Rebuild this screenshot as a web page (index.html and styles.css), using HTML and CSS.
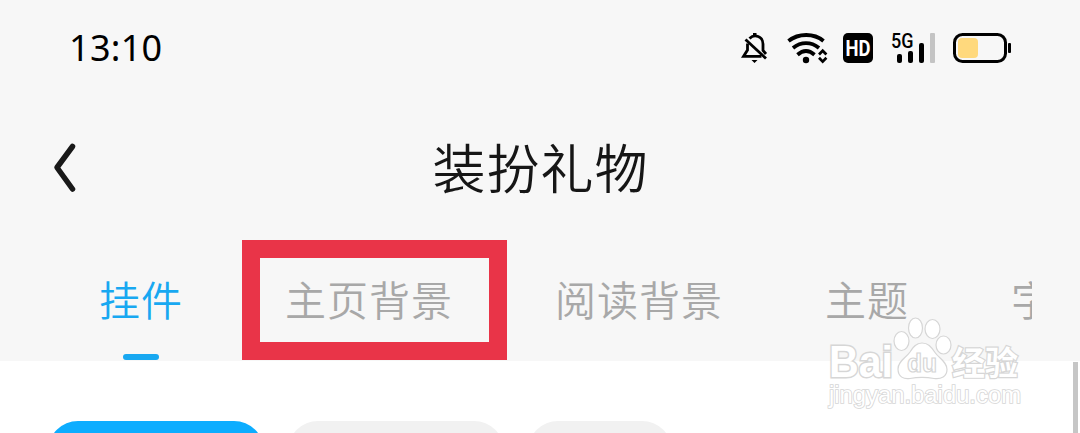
FILE: index.html
```html
<!DOCTYPE html>
<html lang="zh-CN">
<head>
  <meta charset="utf-8">
  <title>装扮礼物</title>
  <link rel="stylesheet" href="styles.css">
</head>
<body>
  <header class="header">
    <div class="status-bar">
      <span class="time">13:10</span>
      <svg class="status-icons" width="274" height="36" viewBox="738 30 274 36">
        <!-- muted bell -->
        <g fill="none" stroke="#000" stroke-width="2.8">
          <path d="M745.500 39.500l20.500 19"/>
          <path d="M747.500 43.500V50l-4 6.400h18M749.500 38.500c5-5 13.500-2 13.500 5.500v6.500l3 3.500"/>
        </g>
        <path d="M753 33h3.500v3.500H753zM751.500 60h6l-3 3z"/>
        <!-- wifi -->
        <g fill="none" stroke="#000" stroke-width="3.800">
          <path d="M788.500 41c10-8 25.500-8 35 0"/>
          <path d="M793 48c8-6.500 18-6.500 26 0"/>
          <path d="M797.500 54.800c5.500-4.800 11.500-4.800 17 0"/>
        </g>
        <circle cx="806" cy="60" r="3.200"/>
        <path d="M819 54.500l3.700-3.800 3.700 3.800M819 57.800l3.700 3.800 3.700-3.800" fill="none" stroke="#000" stroke-width="2.700"/>
        <!-- hd badge -->
        <rect x="843" y="33" width="30" height="30" rx="5"/>
        <text class="hd" x="845.500" y="56" textLength="25" lengthAdjust="spacingAndGlyphs">HD</text>
        <!-- signal -->
        <text class="net" x="891" y="47.500" textLength="22.500" lengthAdjust="spacingAndGlyphs">5G</text>
        <rect x="897" y="54" width="5" height="9" rx="2"/>
        <rect x="908" y="51" width="5" height="12" rx="2"/>
        <rect x="919" y="43" width="5" height="20" rx="2"/>
        <rect x="930" y="33" width="5" height="30" rx="1" fill="#c4c4c4"/>
        <!-- battery -->
        <rect x="954.500" y="34.500" width="51" height="27" rx="8" fill="none" stroke="#000" stroke-width="3"/>
        <rect x="958" y="38" width="20" height="20" rx="4" fill="#ffd97d"/>
        <rect x="1008" y="43" width="3" height="10" rx="1"/>
      </svg>
    </div>

    <div class="title-bar">
      <svg class="back" width="28" height="52" viewBox="0 0 28 52">
        <path d="M20.500 4.500L5 25.500l15.500 21.500" fill="none" stroke="#191919" stroke-width="5.500" stroke-linecap="round" stroke-linejoin="round"/>
      </svg>
      <h1 class="title">装扮礼物</h1>
    </div>

    <nav class="tabs">
      <a class="tab active">挂件</a>
      <a class="tab marked">主页背景</a>
      <a class="tab">阅读背景</a>
      <a class="tab">主题</a>
      <a class="tab">字</a>
    </nav>
  </header>

  <main class="content">
    <div class="chip chip-first"></div>
    <div class="chip chip-second"></div>
    <div class="chip chip-third"></div>
    <div class="scrollbar"></div>
  </main>

  <svg class="watermark" width="210" height="100" viewBox="820 314 210 100">
    <g class="mark">
      <text class="bai" x="829" y="377" textLength="64" lengthAdjust="spacingAndGlyphs">Bai</text>
      <ellipse cx="901.500" cy="341" rx="7.500" ry="9.500"/>
      <ellipse cx="915.500" cy="328" rx="7" ry="10"/>
      <ellipse cx="932.500" cy="329" rx="7.500" ry="9.500"/>
      <ellipse cx="943.500" cy="345" rx="7.500" ry="9"/>
      <path d="M922 343c-6 0-9 4-12 9-4 6-12 9-12 17 0 8 6 10.500 12 9.500 8-1.500 16-1.500 24 0 7 1 13-2 13-9 0-8-8-11-12-17-4-6-7-9.500-13-9.500z"/>
      <text class="du" x="907" y="372" textLength="30" lengthAdjust="spacingAndGlyphs">du</text>
      <text class="jy" x="952" y="375">经验</text>
      <text class="url" x="829" y="403" textLength="192" lengthAdjust="spacingAndGlyphs">jingyan.baidu.com</text>
    </g>
  </svg>
</body>
</html>
```
FILE: styles.css
```css
*,
*::before,
*::after {
  box-sizing: border-box;
}
body {
  margin: 0;
  height: 433px;
  overflow: hidden;
  background: #fff;
  font-family: "Noto Sans CJK SC", sans-serif;
}
.header {
  height: 361px;
  background: #f7f7f7;
}
.status-bar {
  display: flex;
  justify-content: space-between;
  align-items: center;
  height: 96px;
  padding: 0 68px 0 69px;
}
.time {
  font-family: "Noto Sans", sans-serif;
  font-size: 36px;
  line-height: 40px;
  letter-spacing: 0.3px;
  color: #000;
}
.hd {
  font: bold 22px "Roboto", sans-serif;
  fill: #fff;
}
.net {
  font: 500 20px "Roboto", sans-serif;
}
.title-bar {
  display: grid;
  grid-template-columns: 28px 1fr 28px;
  align-items: center;
  height: 144px;
  padding: 0 48px 0 52px;
}
.title {
  margin: 0 0 4px;
  font-size: 53px;
  font-weight: 350;
  line-height: 80px;
  letter-spacing: 1px;
  text-align: center;
  text-indent: -3px;
  color: #161616;
}
.tabs {
  display: flex;
  gap: 102px;
  height: 121px;
  margin-right: 48px;
  padding-left: 99px;
  overflow: hidden;
}
.tab {
  position: relative;
  flex: none;
  font-size: 41px;
  font-weight: 350;
  line-height: 116px;
  letter-spacing: 1px;
  color: #a8a8a8;
}
.active {
  color: #18a8f1;
}
.active::after {
  content: "";
  position: absolute;
  left: 24px;
  bottom: 1px;
  width: 36px;
  height: 6px;
  border-radius: 3px;
  background: #18a8f1;
}
/* red frame laid over the tab */
.marked::before {
  content: "";
  position: absolute;
  left: -43px;
  top: 0;
  width: 265px;
  height: 120px;
  border: 18px solid #e93448;
}
.content {
  position: relative;
  display: flex;
  height: 72px;
  padding: 60px 0 0 48px;
  overflow: hidden;
}
.chip {
  flex: none;
  height: 60px;
  border-radius: 30px;
  background: #f1f1f1;
}
.chip-first {
  width: 216px;
  background: #0dadff;
}
.chip-second {
  width: 216px;
  margin-left: 24px;
}
.chip-third {
  width: 144px;
  margin-left: 24px;
}
.scrollbar {
  position: absolute;
  top: 1px;
  right: 2px;
  width: 5px;
  height: 71px;
  background: #c6c6c6;
}
.watermark {
  position: absolute;
  left: 820px;
  top: 314px;
}
.mark {
  fill: #fff;
  stroke: #d6d6d6;
  stroke-width: 1.2;
}
.bai {
  font: bold 44px "Liberation Sans", sans-serif;
  stroke-width: 3;
  paint-order: stroke;
}
.du {
  font: bold 25px "Liberation Sans", sans-serif;
}
.jy {
  font: bold 33px "Noto Sans CJK SC", sans-serif;
  stroke-width: 2.4;
  paint-order: stroke;
}
.url {
  font: 23px "Liberation Sans", sans-serif;
  stroke-width: 1.6;
  paint-order: stroke;
}
```
